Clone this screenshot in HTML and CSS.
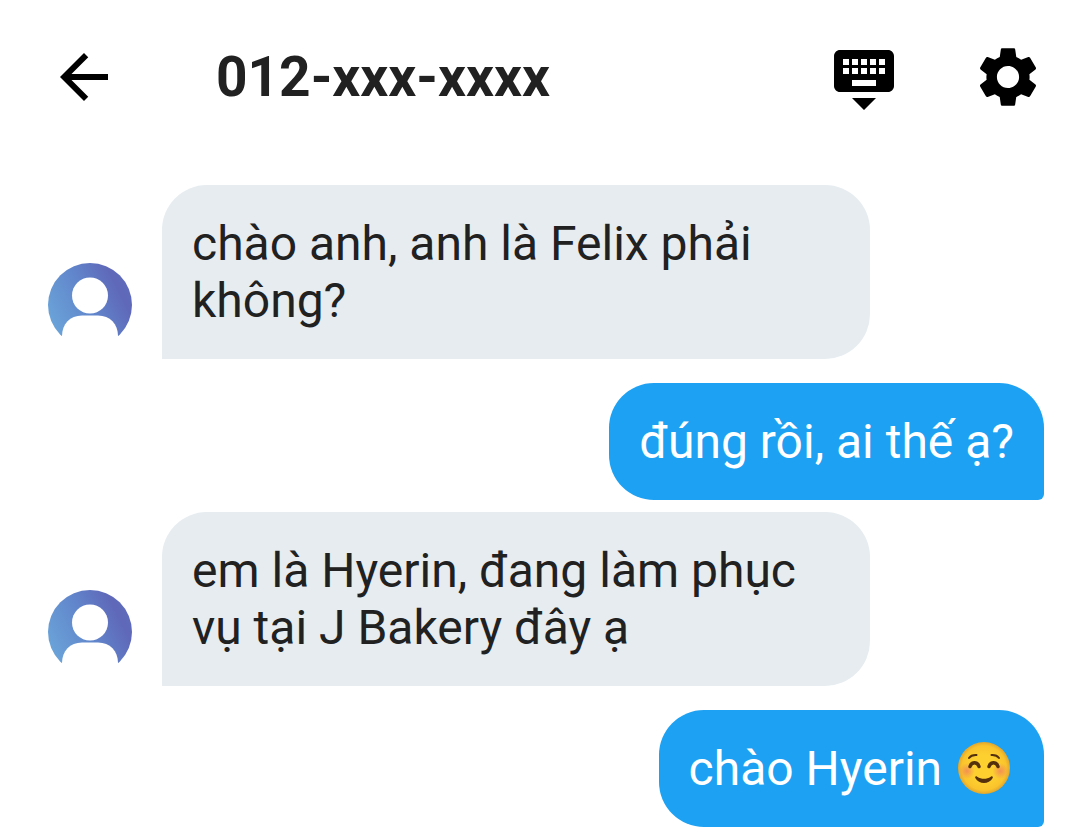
FILE: index.html
```html
<!DOCTYPE html>
<html lang="vi">
<head>
<meta charset="utf-8">
<meta name="viewport" content="width=device-width, initial-scale=1">
<title>012-xxx-xxxx</title>
<link rel="stylesheet" href="styles.css">
</head>
<body>
<svg class="defs" aria-hidden="true">
  <defs>
    <linearGradient id="avatar-fill" x1="0" y1="0.75" x2="1" y2="0.25">
      <stop offset="0" stop-color="#6ba6da"/>
      <stop offset="0.5" stop-color="#6185cb"/>
      <stop offset="0.85" stop-color="#5f68b9"/>
      <stop offset="1" stop-color="#5f6cbb"/>
    </linearGradient>
    <radialGradient id="face-fill">
      <stop offset="0.5" stop-color="#fdd030"/>
      <stop offset="0.85" stop-color="#fac42c"/>
      <stop offset="1" stop-color="#e2a62c"/>
    </radialGradient>
    <radialGradient id="blush">
      <stop offset="0" stop-color="#f2875a" stop-opacity="0.85"/>
      <stop offset="1" stop-color="#f2875a" stop-opacity="0"/>
    </radialGradient>
    <symbol id="avatar" viewBox="0 0 84 84">
      <circle cx="42" cy="42" r="42" fill="url(#avatar-fill)"/>
      <circle cx="42" cy="32.500" r="18" fill="#fff"/>
      <path fill="#fff" d="M14 84V73C14 61 22 52.500 34 52.500H50C62 52.500 70 61 70 73V84Z"/>
    </symbol>
  </defs>
</svg>

<header class="topbar">
  <button class="icon-button" type="button" aria-label="Quay lại">
    <svg class="icon" viewBox="0 0 24 24"><path d="M20 11H7.830l5.590-5.590L12 4l-8 8 8 8 1.410-1.410L7.830 13H20v-2z"/></svg>
  </button>
  <h1 class="title">012-xxx-xxxx</h1>
  <div class="actions">
    <button class="icon-button" type="button" aria-label="Ẩn bàn phím">
      <svg class="icon" viewBox="0 0 24 24"><path d="M20 3H4c-1.100 0-1.990.9-1.990 2L2 15c0 1.100.9 2 2 2h16c1.100 0 2-.9 2-2V5c0-1.100-.9-2-2-2zm-9 3h2v2h-2V6zm0 3h2v2h-2V9zM8 6h2v2H8V6zm0 3h2v2H8V9zm-1 2H5V9h2v2zm0-3H5V6h2v2zm9 7H8v-2h8v2zm0-4h-2V9h2v2zm0-3h-2V6h2v2zm3 3h-2V9h2v2zm0-3h-2V6h2v2zm-7 15l4-4H8l4 4z"/></svg>
    </button>
    <button class="icon-button" type="button" aria-label="Cài đặt">
      <svg class="icon" viewBox="0 0 24 24"><path d="M19.14 12.94c.04-.3.06-.61.06-.94 0-.32-.02-.64-.07-.94l2.030-1.580c.18-.14.23-.41.12-.61l-1.920-3.320c-.12-.22-.37-.29-.59-.22l-2.390.96c-.5-.38-1.030-.7-1.620-.94L14.400 2.810c-.04-.24-.24-.41-.48-.41h-3.840c-.24 0-.43.17-.47.41L9.250 5.350C8.660 5.590 8.120 5.920 7.630 6.290L5.240 5.330c-.22-.08-.47 0-.59.22L2.740 8.870C2.620 9.080 2.660 9.340 2.860 9.480l2.030 1.580C4.840 11.360 4.800 11.690 4.800 12s.02.64.07.94l-2.030 1.580c-.18.14-.23.41-.12.61l1.920 3.320c.12.22.37.29.59.22l2.390-.96c.5.38 1.030.7 1.620.94l.36 2.540c.05.24.24.41.48.41h3.840c.24 0 .44-.17.47-.41l.36-2.540c.59-.24 1.130-.56 1.620-.94l2.390.96c.22.08.47 0 .59-.22l1.920-3.320c.12-.22.07-.47-.12-.61L19.140 12.940zM12 15.700c-2.040 0-3.700-1.660-3.700-3.700s1.660-3.700 3.700-3.700 3.700 1.660 3.700 3.700S14.040 15.700 12 15.700z"/></svg>
    </button>
  </div>
</header>

<main class="chat">
  <div class="message received">
    <svg class="avatar" role="img" aria-label="Hyerin"><use href="#avatar"/></svg>
    <p class="bubble">chào anh, anh là Felix phải không?</p>
  </div>
  <div class="message sent">
    <p class="bubble">đúng rồi, ai thế ạ?</p>
  </div>
  <div class="message received">
    <svg class="avatar" role="img" aria-label="Hyerin"><use href="#avatar"/></svg>
    <p class="bubble">em là Hyerin, đang làm phục vụ tại J Bakery đây ạ</p>
  </div>
  <div class="message sent">
    <p class="bubble">chào Hyerin <svg class="emoji" viewBox="0 0 60 54" role="img" aria-label="mặt cười">
      <circle cx="30" cy="27" r="26" fill="url(#face-fill)"/>
      <circle cx="13" cy="30" r="8" fill="url(#blush)"/>
      <circle cx="46.500" cy="30" r="8" fill="url(#blush)"/>
      <g fill="none" stroke="#55300c" stroke-linecap="round">
        <path stroke-width="2" d="M15 17C16.500 14.800 19 13.800 22.500 14M37.500 14C41 13.800 43.500 14.800 45 17"/>
        <path stroke-width="3.400" d="M16 25.500C17.500 20.500 23.500 20.500 25 25.500M35 25.500C36.500 20.500 42.500 20.500 44 25.500"/>
      </g>
      <path fill="#55300c" d="M21.300 37C20.600 35.700 22 34.800 23.200 35.700C27.500 38.500 32.500 38.500 36.800 35.700C38 34.800 39.400 35.700 38.700 37C35 43.800 25 43.800 21.300 37Z"/>
    </svg></p>
  </div>
</main>
</body>
</html>
```
FILE: styles.css
```css
* {
  box-sizing: border-box;
}

body {
  margin: 0;
  background: #fff;
  color: #212121;
  font-family: Roboto, "Liberation Sans", sans-serif;
}

.defs {
  position: absolute;
  width: 0;
  height: 0;
}

.topbar {
  display: flex;
  align-items: center;
  gap: 96px;
  padding: 41px 36px 42px 48px;
}

.title {
  flex: 1;
  margin: 0;
  font-size: 55px;
  line-height: 66px;
  font-weight: 700;
}

.actions {
  display: flex;
  gap: 72px;
}

.icon-button {
  display: block;
  padding: 0;
  border: 0;
  background: none;
  color: #000;
  cursor: pointer;
}

.icon {
  display: block;
  width: 72px;
  height: 72px;
  fill: currentColor;
}

.chat {
  display: flex;
  flex-direction: column;
  gap: 12px;
  padding: 30px 36px 8px 48px;
}

.message {
  display: flex;
  align-items: flex-end;
}

.received {
  gap: 30px;
}

.sent {
  justify-content: flex-end;
  margin-top: 12px;
}

.avatar {
  flex: none;
  width: 84px;
  height: 84px;
  margin-bottom: 12px;
}

.bubble {
  max-width: 708px;
  margin: 0;
  padding: 30px;
  font-size: 48px;
  line-height: 57px;
}

.received .bubble {
  border-radius: 45px 45px 45px 0;
  background: #e6ecf0;
}

.sent .bubble {
  border-radius: 45px 45px 6px 45px;
  background: #1da1f2;
  color: #fff;
}

.emoji {
  width: 60px;
  height: 54px;
  vertical-align: -10px;
}
```
